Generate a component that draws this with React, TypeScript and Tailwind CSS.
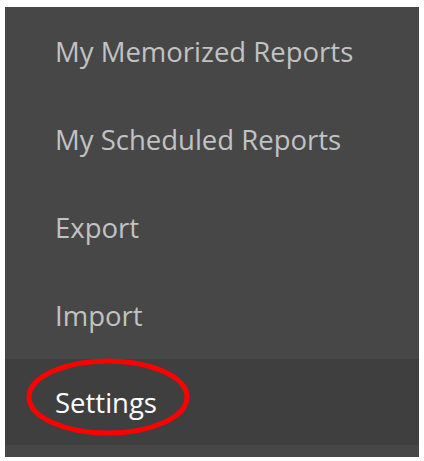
const ITEMS = ["My Memorized Reports", "My Scheduled Reports", "Export", "Import"];

export default function App() {
  return (
    <div className="h-[461px] w-[424px] bg-white pl-[5px] pr-[5px] pt-[7px]">
      <div className="flex flex-col bg-[#474747] font-['Open_Sans',sans-serif]">
        {ITEMS.map((label) => (
          <div key={label} className="flex h-[88px] items-center pl-[50px] pt-[2px] text-[27.5px] text-[#c2c2c2]">
            {label}
          </div>
        ))}
        <div className="relative flex h-[86px] items-center bg-[#3f3f3f] pl-[50px] pt-[2px] text-[27.5px] text-white">
          Settings
          <svg className="absolute left-[21px] top-[-1px]" width="166" height="80" viewBox="0 0 166 80">
            <ellipse cx="82" cy="39" rx="79" ry="36" fill="none" stroke="#ff0000" strokeWidth="5" />
          </svg>
        </div>
        <div className="h-[12px]" />
      </div>
    </div>
  );
}
